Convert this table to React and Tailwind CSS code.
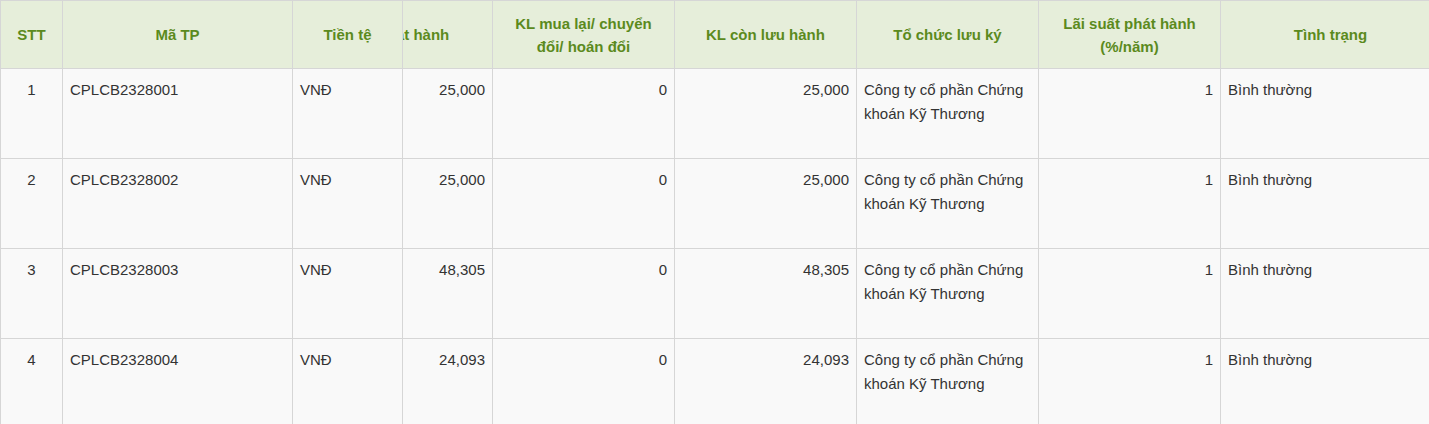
const rows = [
    { stt: 1, code: "CPLCB2328001", issued: "25,000", swapped: "0", remaining: "25,000" },
    { stt: 2, code: "CPLCB2328002", issued: "25,000", swapped: "0", remaining: "25,000" },
    { stt: 3, code: "CPLCB2328003", issued: "48,305", swapped: "0", remaining: "48,305" },
    { stt: 4, code: "CPLCB2328004", issued: "24,093", swapped: "0", remaining: "24,093" },
];

const head =
    "h-[68px] flex items-center justify-center text-center px-[7px] border-r border-b border-[#d6d6d6] bg-[#e6eeda] text-[#5b8a1d] font-bold leading-[23px]";
const cell = "h-[90px] px-[7px] pt-[9px] leading-6 border-r border-b border-[#d6d6d6] bg-[#f9f9f9]";

export default function App() {
    return (
        <div
            className="w-[1429px] h-[424px] overflow-hidden bg-white text-[15px] text-[#333]"
            style={{ fontFamily: '"Liberation Sans", Arial, sans-serif' }}
        >
            <div className="flex border-t border-l border-[#d6d6d6]">
                {/* Fixed columns */}
                <div className="shrink-0 flex flex-col">
                    <div className="flex">
                        <div className={`${head} w-[62px]`}>STT</div>
                        <div className={`${head} w-[230px]`}>Mã TP</div>
                        <div className={`${head} w-[110px]`}>Tiền tệ</div>
                    </div>
                    {rows.map((r) => (
                        <div key={r.stt} className="flex">
                            <div className={`${cell} w-[62px] text-center`}>{r.stt}</div>
                            <div className={`${cell} w-[230px]`}>{r.code}</div>
                            <div className={`${cell} w-[110px]`}>VNĐ</div>
                        </div>
                    ))}
                </div>

                {/* Scrolled columns */}
                <div className="flex-1 overflow-hidden">
                    <div className="-ml-[92px] flex flex-col w-max">
                        <div className="flex">
                            <div className={`${head} w-[182px]`}>KL phát hành</div>
                            <div className={`${head} w-[182px]`}>KL mua lại/ chuyển đổi/ hoán đổi</div>
                            <div className={`${head} w-[182px]`}>KL còn lưu hành</div>
                            <div className={`${head} w-[182px]`}>Tổ chức lưu ký</div>
                            <div className={`${head} w-[182px]`}>Lãi suất phát hành (%/năm)</div>
                            <div className={`${head} w-[220px]`}>Tình trạng</div>
                        </div>
                        {rows.map((r) => (
                            <div key={r.stt} className="flex">
                                <div className={`${cell} w-[182px] text-right`}>{r.issued}</div>
                                <div className={`${cell} w-[182px] text-right`}>{r.swapped}</div>
                                <div className={`${cell} w-[182px] text-right`}>{r.remaining}</div>
                                <div className={`${cell} w-[182px]`}>Công ty cổ phần Chứng khoán Kỹ Thương</div>
                                <div className={`${cell} w-[182px] text-right`}>1</div>
                                <div className={`${cell} w-[220px]`}>Bình thường</div>
                            </div>
                        ))}
                    </div>
                </div>
            </div>
        </div>
    );
}
